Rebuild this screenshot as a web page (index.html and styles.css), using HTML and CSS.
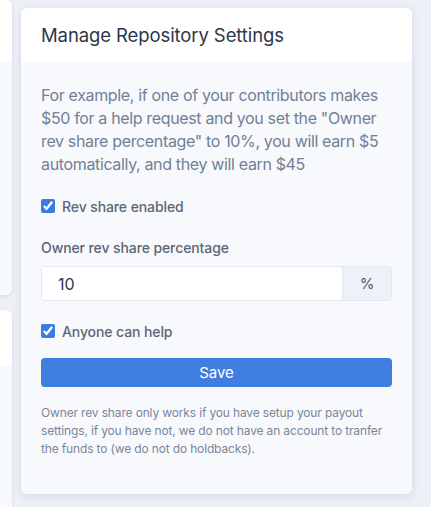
FILE: index.html
```html
<!DOCTYPE html>
<html lang="en">
<head>
<meta charset="utf-8">
<title>Manage Repository Settings</title>
<link rel="stylesheet" href="styles.css">
</head>
<body>
<div class="page">
  <div class="side">
    <div class="side-card side-card-1">
      <div class="side-head side-head-1"></div>
      <div class="side-body"></div>
    </div>
    <div class="side-card side-card-2">
      <div class="side-head side-head-2"></div>
      <div class="side-body"></div>
    </div>
  </div>
  <div class="card">
    <div class="card-head">
      <h2 class="card-title">Manage Repository Settings</h2>
    </div>
    <div class="card-body">
      <p class="intro">For example, if one of your contributors makes $50 for a help request and you set the "Owner rev share percentage" to 10%, you will earn $5 automatically, and they will earn $45</p>
      <label class="check-row check-row-1">
        <input type="checkbox" class="check" checked>
        <span>Rev share enabled</span>
      </label>
      <div class="field-label">Owner rev share percentage</div>
      <div class="input-group">
        <input class="text-input" type="text" value="10">
        <span class="addon">%</span>
      </div>
      <label class="check-row check-row-2">
        <input type="checkbox" class="check" checked>
        <span>Anyone can help</span>
      </label>
      <button class="save" type="button">Save</button>
      <p class="note">Owner rev share only works if you have setup your payout settings, if you have not, we do not have an account to tranfer the funds to (we do not do holdbacks).</p>
    </div>
  </div>
</div>
</body>
</html>
```

FILE: styles.css
```css
html, body {
  margin: 0;
  padding: 0;
}
body {
  background: #edf0f6;
  font-family: Inter, "Noto Sans", "Liberation Sans", sans-serif;
  color: #4a5568;
  width: 431px;
  height: 507px;
  overflow: hidden;
}
.page {
  display: flex;
  align-items: flex-start;
}
.side {
  width: 12px;
  display: flex;
  flex-direction: column;
  gap: 15px;
}
.side-card {
  background: #f8f9fc;
  border-radius: 0 6px 6px 0;
  box-shadow: 0 1px 4px rgba(30, 45, 80, 0.12);
  overflow: hidden;
}
.side-card-1 {
  height: 295px;
}
.side-card-2 {
  height: 220px;
}
.side-head {
  background: #ffffff;
}
.side-head-1 {
  height: 62px;
}
.side-head-2 {
  height: 56px;
}
.card {
  margin-left: 9px;
  margin-top: 8px;
  width: 391px;
  background: #f8f9fc;
  border-radius: 6px;
  box-shadow: 0 2px 8px rgba(30, 45, 80, 0.12);
  overflow: hidden;
}
.card-head {
  background: #ffffff;
  height: 54px;
  display: flex;
  align-items: center;
  padding: 0 20px;
}
.card-title {
  margin: 0;
  font-size: 18.5px;
  font-weight: 400;
  color: #2d3748;
  letter-spacing: -0.1px;
}
.card-body {
  padding: 22px 20px 36px;
}
.intro {
  margin: 0;
  font-size: 16px;
  line-height: 23px;
  color: #718096;
  letter-spacing: -0.35px;
}
.check-row {
  display: flex;
  align-items: center;
  gap: 7px;
  height: 20px;
  font-size: 14px;
  font-weight: 500;
  color: #5a6678;
  letter-spacing: -0.1px;
}
.check-row-1 {
  margin-top: 20px;
}
.check-row-2 {
  margin-top: 20px;
}
.check {
  margin: 0;
  width: 14px;
  height: 14px;
  accent-color: #3a7be6;
}
.field-label {
  margin-top: 22px;
  font-size: 14px;
  line-height: 20px;
  font-weight: 500;
  color: #5a6678;
  letter-spacing: -0.1px;
}
.input-group {
  margin-top: 8px;
  display: flex;
  height: 35px;
  border: 1px solid #e2e8f0;
  border-radius: 4px;
  box-sizing: border-box;
  overflow: hidden;
  background: #ffffff;
}
.text-input {
  flex: 1;
  min-width: 0;
  border: 0;
  outline: none;
  padding: 0 16px;
  font-family: inherit;
  font-size: 16px;
  color: #2d3748;
  background: #ffffff;
}
.addon {
  width: 48px;
  display: flex;
  align-items: center;
  justify-content: center;
  background: #eef1f7;
  border-left: 1px solid #e2e8f0;
  font-size: 15px;
  color: #4a5568;
}
.save {
  display: block;
  width: 100%;
  margin-top: 17px;
  height: 29px;
  border: 0;
  border-radius: 4px;
  background: #3f7ddf;
  color: #ffffff;
  font-family: inherit;
  font-size: 15px;
  font-weight: 400;
  cursor: pointer;
}
.note {
  margin: 17px 0 0;
  font-size: 12px;
  line-height: 18px;
  color: #7a8699;
  letter-spacing: -0.15px;
}
```
